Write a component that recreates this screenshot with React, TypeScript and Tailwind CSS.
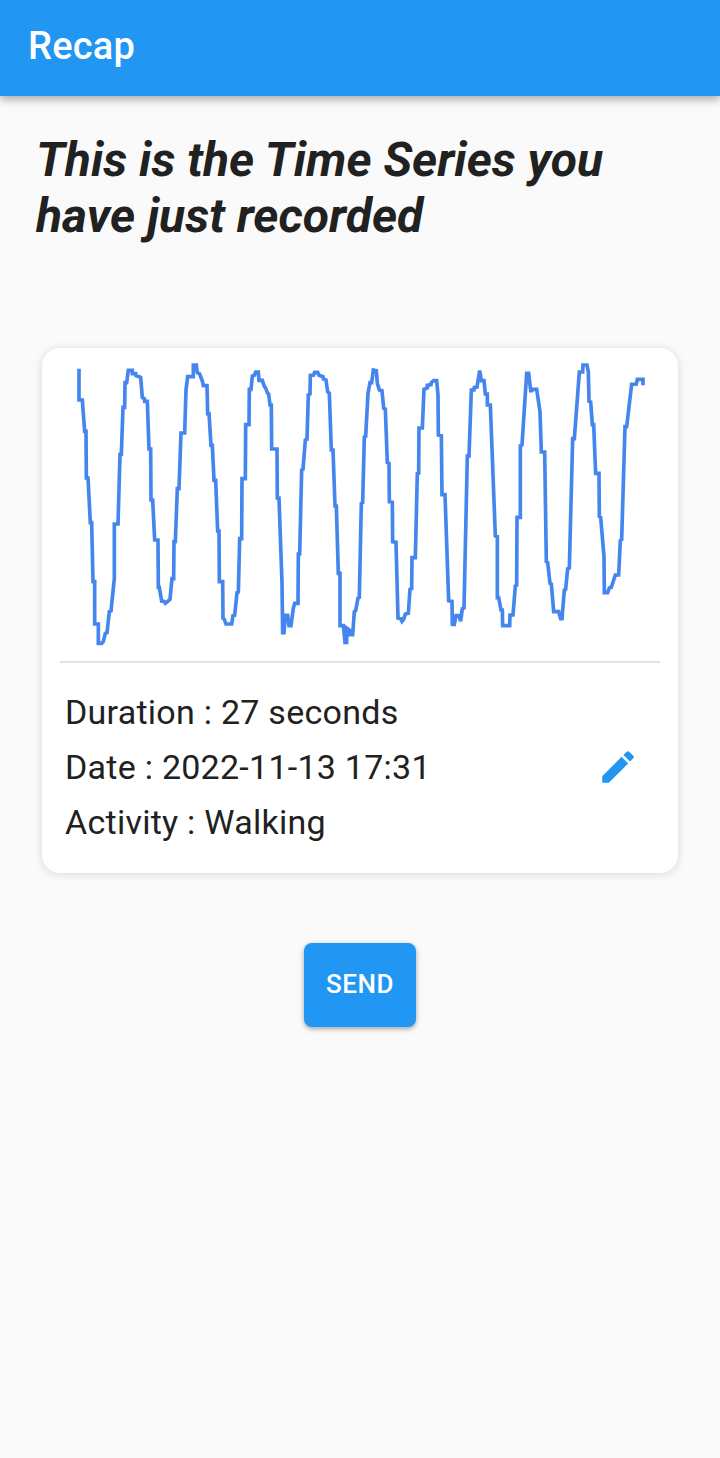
const SEGMENTS = [
  {
    offset: 0,
    points:
      "57,56 57,150 67,150 74,244 78,244 79,384 84,384 91,518 95,518 99,695 104,695 104,822 115,822 115,880 125,880 130,874 136,850 141,848 148,785 153,783 163,685 163,522 174,522 180,313 184,313 189,172 194,172 195,98 200,98 205,61 217,61 217,71 227,71 228,77 238,80 242,82 247,143 253,146 254,154 262,154 267,297 272,297 273,450 278,450 284,570 294,570 295,712 298,712 305,753 312,754 316,760 323,754 330,748 336,686 341,686 342,575 346,575 352,416 357,416 363,249 374,249 378,120 383,80 400,80 400,45 409,45 412,68 419,72 428,96 430,107 441,107 443,191 447,191 453,286 457,286 462,391 467,391 473,543 477,543",
  },
  {
    offset: 420,
    points:
      "58,695 68,695 69,805 73,808 78,822 95,822 99,797 104,796 111,728 115,726 119,566 125,566 126,386 136,386 137,224 147,224 148,118 153,118 157,78 163,76 167,66 175,66 177,91 187,91 193,110 196,112 203,130 206,132 210,165 214,165 215,297 231,297 232,444 237,444 246,700 248,848 252,848 256,796 263,796 267,827 273,827 280,775 284,760 294,760 295,612 299,612 305,360 309,358 316,270 321,268 325,134 330,132 331,76 341,75 344,67 353,67 357,76 369,80 370,87 378,90 383,125 388,130 394,300 399,300 405,468 409,468 415,670 420,670 420,827 430,827 435,877 440,877 441,835 448,840 449,854 458,854",
  },
  {
    offset: 840,
    points:
      "43,785 47,782 54,744 58,742 64,460 68,458 73,261 77,259 84,130 90,98 95,98 100,60 109,62 112,100 118,120 126,122 131,175 136,177 142,338 147,340 148,455 157,457 158,575 168,577 174,804 182,806 186,814 191,808 196,792 205,790 210,718 215,716 216,623 226,623 232,371 236,370 237,234 247,234 252,118 262,114 262,106 273,104 274,98 281,92 290,92 294,135 295,255 304,257 306,434 315,434 326,752 336,754 337,823 343,823 348,797 357,797 362,814 367,776 372,774 382,318 387,318 394,120 402,120 403,112 411,111 414,92 419,62 424,92 432,92 436,132 442,132 442,165 451,165 466,558 472,560 472,743",
  },
  {
    offset: 1290,
    points:
      "26,743 33,780 37,780 38,827 59,827 60,795 69,795 76,708 80,706 81,502 91,502 91,287 96,285 110,70 116,70 122,122 125,122 127,118 140,118 150,185 154,306 164,306 169,635 173,637 180,700 184,702 191,785 206,785 212,806 216,806 223,720 227,718 233,656 238,654 248,266 253,266 264,120 268,66 278,66 279,45 291,45 295,66 297,154 302,156 307,224 311,224 317,370 327,370 328,500 332,502 342,620 343,728 353,728 358,714 364,712 376,675 386,675 391,571 395,569 405,230 410,230 425,103 439,102 442,88 459,88 459,106",
  },
];

const series = SEGMENTS.flatMap(({ offset, points }) =>
  points.split(" ").map((pair) => {
    const [x, y] = pair.split(",").map(Number);
    return `${x + offset},${y}`;
  }),
).join(" ");

function TimeSeriesChart() {
  return (
    <svg viewBox="0 0 1800 930" className="block h-[310px] w-[600px] shrink-0" aria-hidden="true">
      <polyline points={series} fill="none" stroke="#4486ee" strokeWidth="11" strokeMiterlimit="3" />
    </svg>
  );
}

function EditIcon() {
  return (
    <svg viewBox="0 0 24 24" className="size-[42px] fill-[#2196f3]" aria-hidden="true">
      <path d="M3 17.25V21h3.75L17.81 9.94l-3.75-3.75L3 17.25zM20.71 7.04a.996.996 0 0 0 0-1.41l-2.34-2.34a.996.996 0 0 0-1.41 0l-1.83 1.83 3.75 3.75 1.83-1.83z" />
    </svg>
  );
}

export default function App() {
  return (
    <div className="flex h-[1458px] w-[720px] flex-col overflow-hidden bg-[#fafafa] font-['Roboto',sans-serif] text-[#212121]">
      <header className="flex h-24 shrink-0 items-center bg-[#2196f3] px-7 pb-1 text-white shadow-[0_4px_8px_rgba(0,0,0,0.3)]">
        <h1 className="pt-px text-[38px] font-medium tracking-[0.25px]">Recap</h1>
      </header>
      <main className="flex flex-col items-center">
        <h2 className="w-full pt-9 pr-9 pl-9 text-[48px] leading-[56px] font-bold tracking-[0.02px] italic">
          This is the Time Series you
          <br />
          have just recorded
        </h2>
        <section className="mt-[103.5px] flex h-[525px] w-[636px] flex-col rounded-[18px] bg-white px-[18px] pt-[2.5px] shadow-[0_1px_10px_rgba(0,0,0,0.14)]">
          <TimeSeriesChart />
          <div className="mt-[0.5px] h-0.5 shrink-0 bg-[#e2e2e2]" />
          <div className="flex items-center justify-between pt-[22px] pr-[21px] pl-[5px]">
            <div className="text-[34px] leading-[55px] tracking-[0.26px]">
              <p>Duration : 27 seconds</p>
              <p>Date : 2022-11-13 17:31</p>
              <p>Activity : Walking</p>
            </div>
            <button aria-label="Edit">
              <EditIcon />
            </button>
          </div>
        </section>
        <button className="mt-[70px] h-[84px] w-28 rounded-lg bg-[#2196f3] text-[26px] font-medium tracking-[0.5px] text-white shadow-[0_2px_5px_rgba(0,0,0,0.35)]">
          SEND
        </button>
      </main>
    </div>
  );
}
